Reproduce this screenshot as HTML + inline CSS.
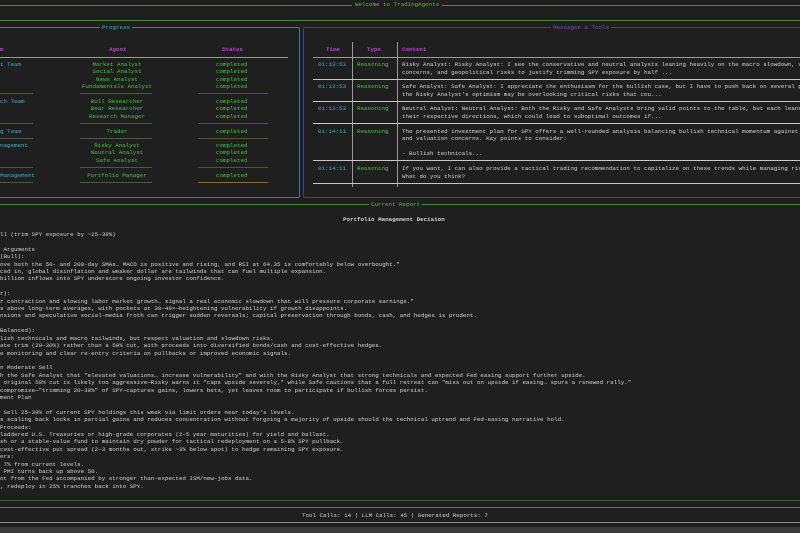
<!DOCTYPE html>
<html><head><meta charset="utf-8"><style>
html,body{margin:0;padding:0;width:800px;height:533px;overflow:hidden;background:#1f1f1f;}
body{position:relative;font-family:"Liberation Mono",monospace;font-size:5.85px;color:#d2d2d2;}
.t{position:absolute;white-space:pre;line-height:7px;}
.l{position:absolute;height:1px;}
.g{color:#46c83c}.c{color:#3cb4c8}.m{color:#c23ed2}.w{color:#d6d6d6}.b{font-weight:bold}
.ctr{transform:translateX(-50%);}
</style></head><body>
<!-- top title -->
<div class="l" style="left:0;top:5px;width:800px;background:#4a8a30"></div>
<div class="t g" style="left:352px;top:1px;background:#1f1f1f;padding:0 3px">Welcome to TradingAgents</div>
<div class="l" style="left:0;top:20px;width:800px;background:#4a8a30"></div>

<!-- Progress panel -->
<div style="position:absolute;left:-5px;top:27px;width:303px;height:169px;border:1px solid #2f7f9c;border-radius:2px"></div>
<div class="t c" style="left:100px;top:24px;background:#1f1f1f;padding:0 2px">Progress</div>
<div class="t m b" style="left:0;top:46px">m</div>
<div class="t m b" style="left:109px;top:46px">Agent</div>
<div class="t m b" style="left:222px;top:46px">Status</div>
<div class="l" style="left:0;top:57px;width:288px;background:#9a9a9a"></div>

<div class="t c" style="left:0;top:61px">t Team</div>
<div class="t g" style="left:117px;top:61px;text-align:center;transform:translateX(-50%);line-height:7.3px">Market Analyst
Social Analyst
News Analyst
Fundamentals Analyst</div>
<div class="t g" style="left:216px;top:61px;line-height:7.3px">completed
completed
completed
completed</div>
<div class="l" style="left:0;top:93px;width:33px;background:#4a5a40"></div>
<div class="l" style="left:80px;top:93px;width:72px;background:#4a5a40"></div>
<div class="l" style="left:198px;top:93px;width:70px;background:#5a5030"></div>

<div class="t c" style="left:0;top:98px">ch Team</div>
<div class="t g" style="left:117px;top:98px;text-align:center;transform:translateX(-50%);line-height:7.3px">Bull Researcher
Bear Researcher
Research Manager</div>
<div class="t g" style="left:216px;top:98px;line-height:7.3px">completed
completed
completed</div>
<div class="l" style="left:0;top:123px;width:33px;background:#4a5a40"></div>
<div class="l" style="left:80px;top:123px;width:72px;background:#4a5a40"></div>
<div class="l" style="left:198px;top:123px;width:70px;background:#5a5030"></div>

<div class="t c" style="left:0;top:128px">g Team</div>
<div class="t g" style="left:117px;top:128px;transform:translateX(-50%)">Trader</div>
<div class="t g" style="left:216px;top:128px">completed</div>
<div class="l" style="left:0;top:138px;width:33px;background:#4a5a40"></div>
<div class="l" style="left:80px;top:138px;width:72px;background:#4a5a40"></div>
<div class="l" style="left:198px;top:138px;width:70px;background:#5a5030"></div>

<div class="t c" style="left:0;top:142px">nagement</div>
<div class="t g" style="left:117px;top:142px;text-align:center;transform:translateX(-50%);line-height:7.3px">Risky Analyst
Neutral Analyst
Safe Analyst</div>
<div class="t g" style="left:216px;top:142px;line-height:7.3px">completed
completed
completed</div>
<div class="l" style="left:0;top:167px;width:33px;background:#4a5a40"></div>
<div class="l" style="left:80px;top:167px;width:72px;background:#4a5a40"></div>
<div class="l" style="left:198px;top:167px;width:70px;background:#5a5030"></div>

<div class="t c" style="left:0;top:172px">Management</div>
<div class="t g" style="left:117px;top:172px;transform:translateX(-50%)">Portfolio Manager</div>
<div class="t g" style="left:216px;top:172px">completed</div>
<div class="l" style="left:0;top:182px;width:33px;background:#4a5a40"></div>
<div class="l" style="left:80px;top:182px;width:72px;background:#4a5a40"></div>
<div class="l" style="left:198px;top:182px;width:70px;background:#8a6a30"></div>

<!-- Messages panel -->
<div style="position:absolute;left:303px;top:27px;width:510px;height:169px;border:1px solid #4a3a9c;border-radius:2px"></div>
<div class="t" style="left:551px;top:24px;background:#1f1f1f;padding:0 2px;color:#7a4ad0">Messages &amp; Tools</div>
<div class="l" style="left:352px;top:42px;width:1px;height:145px;background:#9a9a9a"></div>
<div class="l" style="left:397px;top:42px;width:1px;height:145px;background:#9a9a9a"></div>
<div class="t m b" style="left:326px;top:46px">Time</div>
<div class="t m b" style="left:367px;top:46px">Type</div>
<div class="t m b" style="left:402px;top:46px">Content</div>
<div class="l" style="left:313px;top:57px;width:487px;background:#9a9a9a"></div>

<div class="t c" style="left:318px;top:61px">01:13:53</div>
<div class="t g" style="left:357px;top:61px">Reasoning</div>
<div class="t w" style="left:402px;top:61px;line-height:7.5px">Risky Analyst: Risky Analyst: I see the conservative and neutral analysts leaning heavily on the macro slowdown, valuation
concerns, and geopolitical risks to justify trimming SPY exposure by half ...</div>
<div class="l" style="left:313px;top:79px;width:487px;background:#c8c8c8"></div>

<div class="t c" style="left:318px;top:83px">01:13:53</div>
<div class="t g" style="left:357px;top:83px">Reasoning</div>
<div class="t w" style="left:402px;top:83px;line-height:7.5px">Safe Analyst: Safe Analyst: I appreciate the enthusiasm for the bullish case, but I have to push back on several points.
the Risky Analyst's optimism may be overlooking critical risks that cou...</div>
<div class="l" style="left:313px;top:101px;width:487px;background:#c8c8c8"></div>

<div class="t c" style="left:318px;top:105px">01:13:53</div>
<div class="t g" style="left:357px;top:105px">Reasoning</div>
<div class="t w" style="left:402px;top:105px;line-height:7.5px">Neutral Analyst: Neutral Analyst: Both the Risky and Safe Analysts bring valid points to the table, but each leans too far
their respective directions, which could lead to suboptimal outcomes if...</div>
<div class="l" style="left:313px;top:123px;width:487px;background:#c8c8c8"></div>

<div class="t c" style="left:318px;top:128px">01:14:11</div>
<div class="t g" style="left:357px;top:128px">Reasoning</div>
<div class="t w" style="left:402px;top:128px;line-height:7.4px">The presented investment plan for SPY offers a well-rounded analysis balancing bullish technical momentum against bearish
and valuation concerns. Key points to consider:

- Bullish technicals...</div>
<div class="l" style="left:313px;top:160px;width:487px;background:#c8c8c8"></div>

<div class="t c" style="left:318px;top:165px">01:14:11</div>
<div class="t g" style="left:357px;top:165px">Reasoning</div>
<div class="t w" style="left:402px;top:165px;line-height:7.5px">If you want, I can also provide a tactical trading recommendation to capitalize on these trends while managing risk.
What do you think?</div>
<div class="l" style="left:313px;top:183px;width:487px;background:#c8c8c8"></div>

<!-- Current report -->
<div class="l" style="left:0;top:204px;width:800px;background:#3f8a2c;height:1px"></div>
<div class="t g" style="left:369px;top:201px;background:#1f1f1f;padding:0 2px">Current Report</div>
<div class="t w b" style="left:343px;top:216px">Portfolio Management Decision</div>
<div class="t w" style="left:0;top:231px;line-height:7.4px">ll (trim SPY exposure by ~25–30%)

 Arguments
(Bull):
ove both the 50- and 200-day SMAs… MACD is positive and rising, and RSI at 64.35 is comfortably below overbought."
ced in, global disinflation and weaker dollar are tailwinds that can fuel multiple expansion.
billion inflows into SPY underscore ongoing investor confidence.

r):
r contraction and slowing labor market growth… signal a real economic slowdown that will pressure corporate earnings."
s above long-term averages, with pockets at 30–40×—heightening vulnerability if growth disappoints.
nsions and speculative social-media froth can trigger sudden reversals; capital preservation through bonds, cash, and hedges is prudent.

Balanced):
lish technicals and macro tailwinds, but respect valuation and slowdown risks.
ate trim (20–30%) rather than a 50% cut, with proceeds into diversified bonds/cash and cost-effective hedges.
e monitoring and clear re-entry criteria on pullbacks or improved economic signals.
 
n Moderate Sell
h the Safe Analyst that "elevated valuations… increase vulnerability" and with the Risky Analyst that strong technicals and expected Fed easing support further upside.
 original 50% cut is likely too aggressive—Risky warns it "caps upside severely," while Safe cautions that a full retreat can "miss out on upside if easing… spurs a renewed rally."
compromise—"trimming 20–30%" of SPY—captures gains, lowers beta, yet leaves room to participate if bullish forces persist.
ment Plan

 Sell 25–30% of current SPY holdings this week via limit orders near today's levels.
s scaling back locks in partial gains and reduces concentration without forgoing a majority of upside should the technical uptrend and Fed-easing narrative hold.
Proceeds:
laddered U.S. Treasuries or high-grade corporates (2–5 year maturities) for yield and ballast.
sh or a stable-value fund to maintain dry powder for tactical redeployment on a 5–8% SPY pullback.
cost-effective put spread (2–3 months out, strike ~3% below spot) to hedge remaining SPY exposure.
ers:
 7% from current levels.
 PMI turns back up above 50.
ot from the Fed accompanied by stronger than-expected ISM/new-jobs data.
, redeploy in 25% tranches back into SPY.</div>

<!-- footer -->
<div class="l" style="left:0;top:500px;width:800px;background:#3a6a28"></div>
<div class="l" style="left:0;top:507px;width:800px;background:#6a6a6a"></div>
<div class="t w" style="left:302px;top:512px">Tool Calls: 14 | LLM Calls: 45 | Generated Reports: 7</div>
<div class="l" style="left:0;top:522px;width:800px;background:#8a8a8a"></div>
<div class="l" style="left:0;top:527px;width:800px;height:6px;background:#3a3a3a"></div>
</body></html>
